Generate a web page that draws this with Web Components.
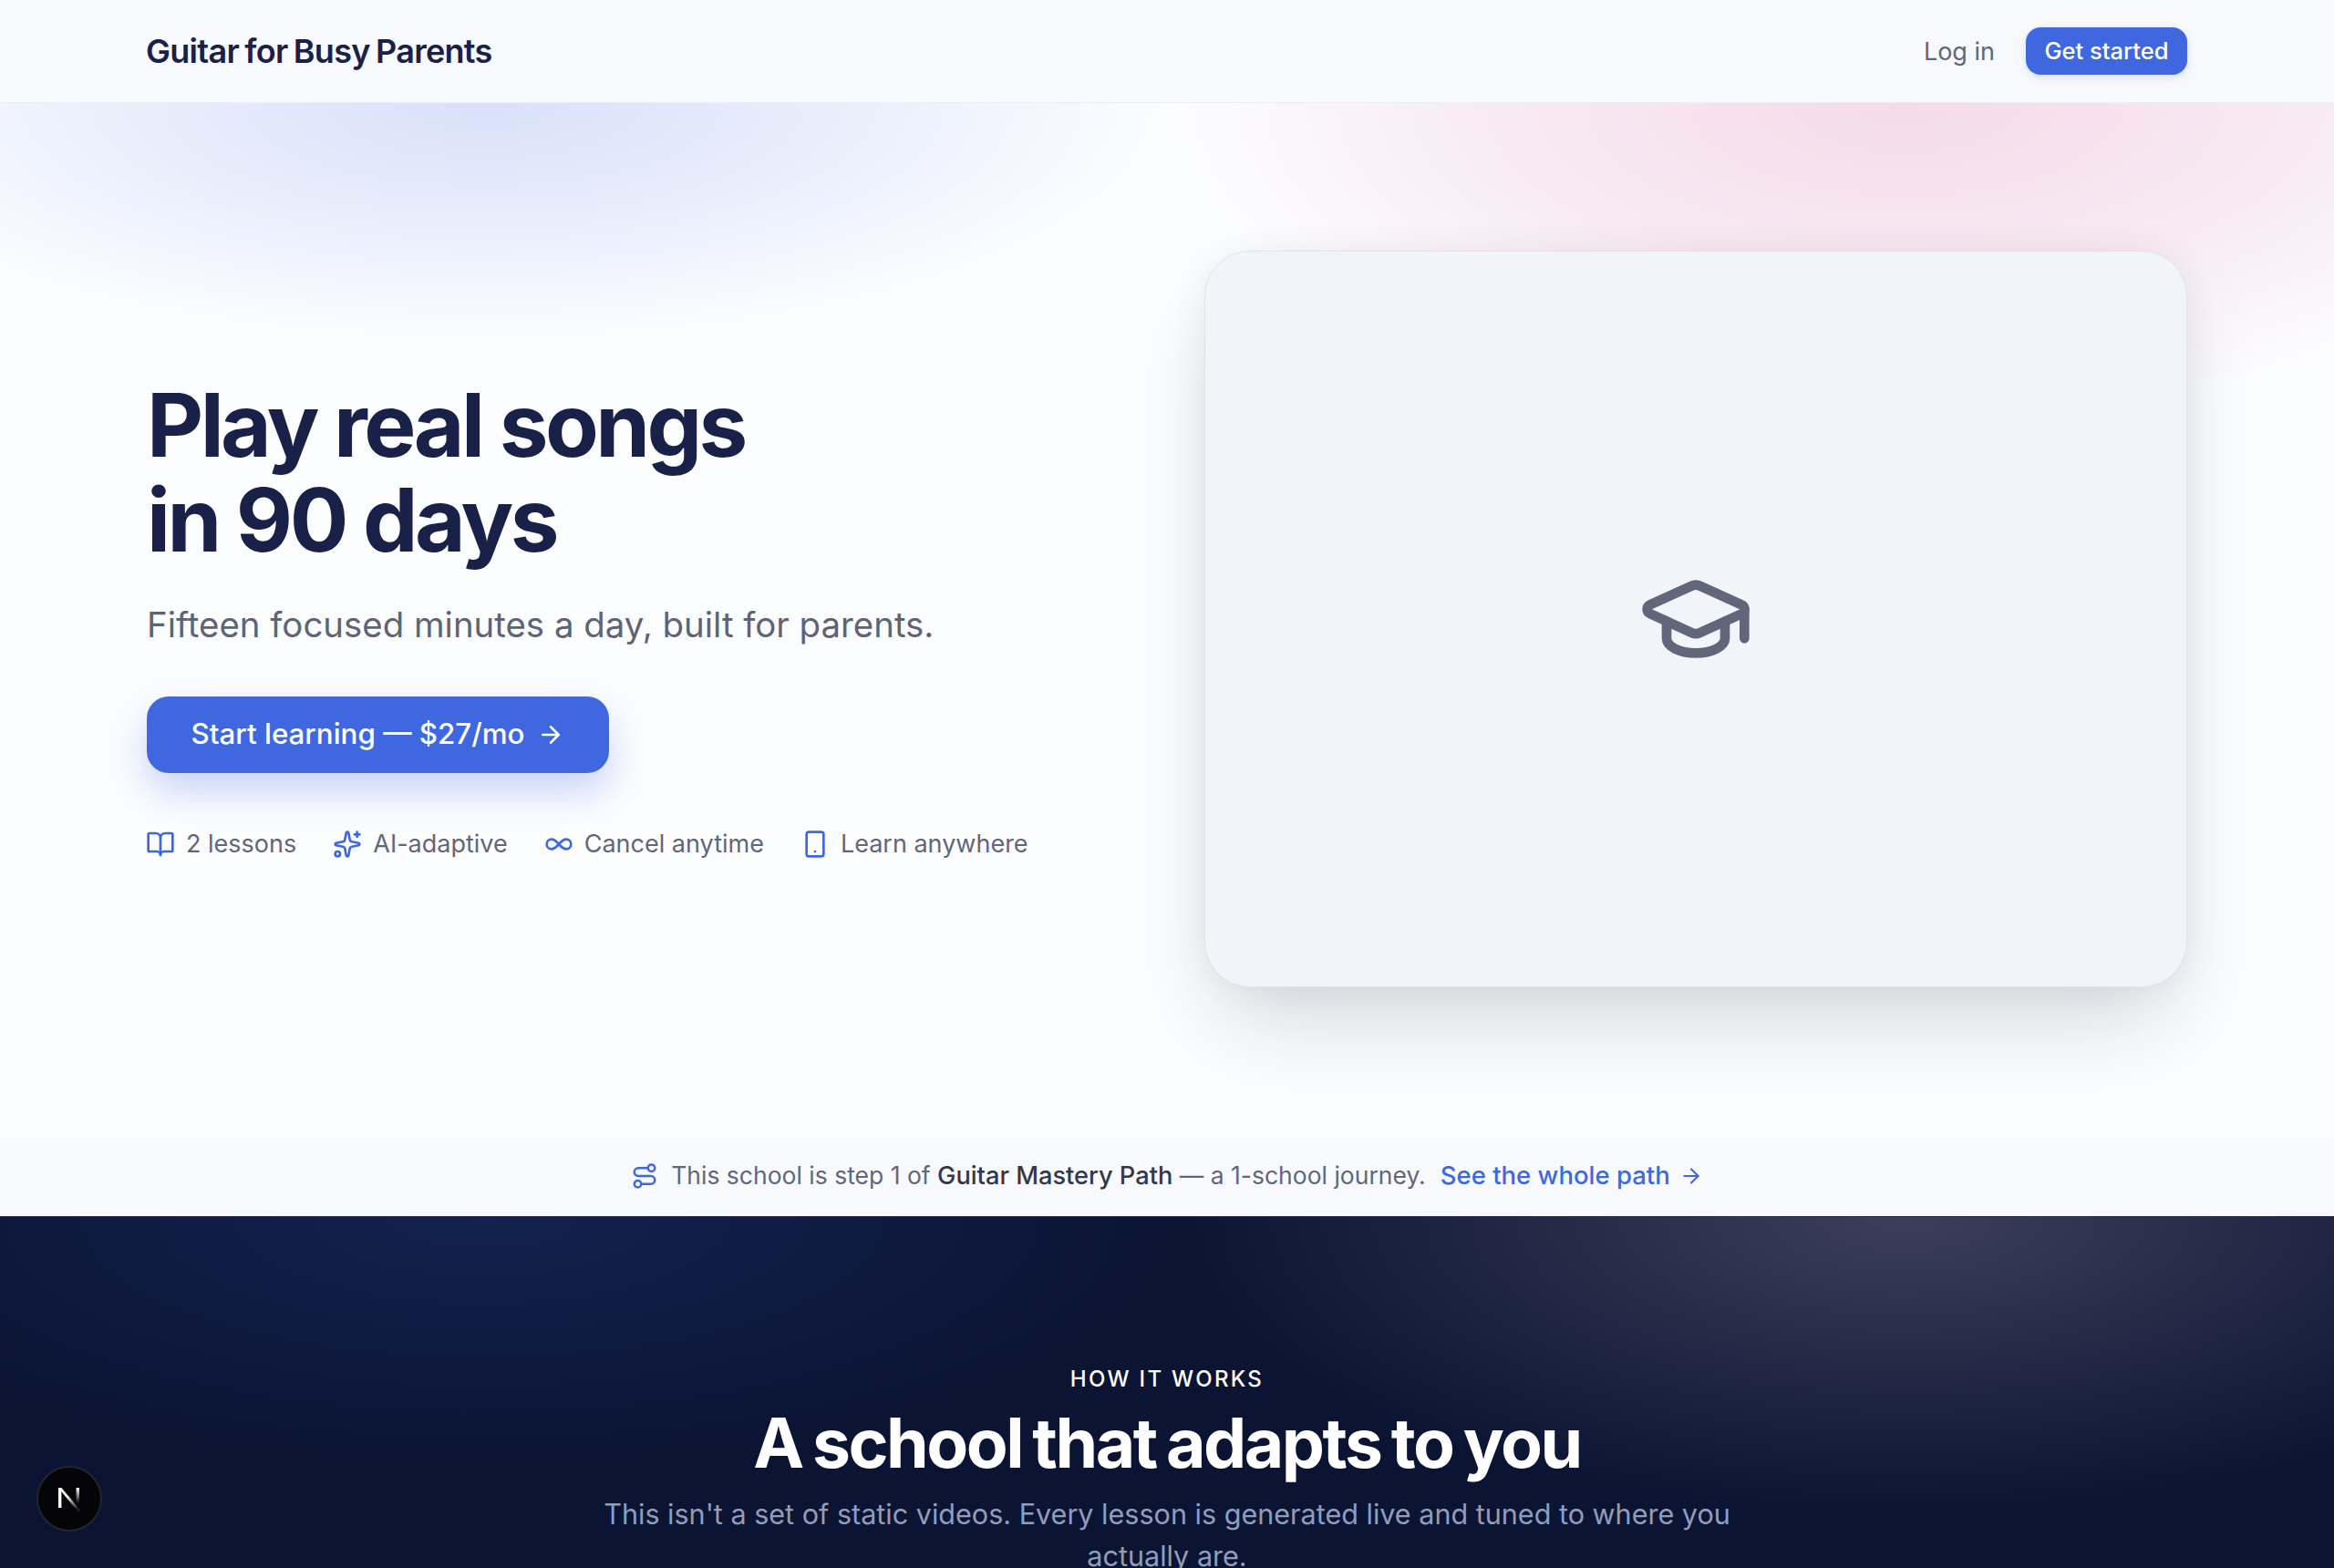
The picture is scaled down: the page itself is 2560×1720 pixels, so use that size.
<!DOCTYPE html>
<html lang="en"><head><meta charset="utf-8"><title>Guitar for Busy Parents</title>
<style>
html,body{margin:0;padding:0}
body{font-family:Inter,"Noto Sans",sans-serif;background:#fcfdff;height:1720px;overflow:hidden}
</style></head><body>
<site-nav></site-nav>
<hero-section></hero-section>
<path-banner></path-banner>
<how-section></how-section>
<dev-badge></dev-badge>
<script>
const P={
 book:'<path d="M12 7v14"/><path d="M3 18a1 1 0 0 1-1-1V4a1 1 0 0 1 1-1h5a4 4 0 0 1 4 4 4 4 0 0 1 4-4h5a1 1 0 0 1 1 1v13a1 1 0 0 1-1 1h-6a3 3 0 0 0-3 3 3 3 0 0 0-3-3z"/>',
 spark:'<path d="M11.017 2.814a1 1 0 0 1 1.966 0l1.051 5.558a2 2 0 0 0 1.594 1.594l5.558 1.051a1 1 0 0 1 0 1.966l-5.558 1.051a2 2 0 0 0-1.594 1.594l-1.051 5.558a1 1 0 0 1-1.966 0l-1.051-5.558a2 2 0 0 0-1.594-1.594l-5.558-1.051a1 1 0 0 1 0-1.966l5.558-1.051a2 2 0 0 0 1.594-1.594z"/><path d="M20 2v4"/><path d="M22 4h-4"/><circle cx="4" cy="20" r="2"/>',
 inf:'<path d="M6 16c5 0 7-8 12-8a4 4 0 0 1 0 8c-5 0-7-8-12-8a4 4 0 1 0 0 8"/>',
 phone:'<rect width="14" height="20" x="5" y="2" rx="2"/><path d="M12 18h.01"/>',
 route:'<circle cx="6" cy="19" r="3"/><path d="M9 19h8.5a3.5 3.5 0 0 0 0-7h-11a3.5 3.5 0 0 1 0-7H15"/><circle cx="18" cy="5" r="3"/>',
 cap:'<path d="M21.42 10.922a1 1 0 0 0-.019-1.838L12.83 5.18a2 2 0 0 0-1.66 0L2.6 9.08a1 1 0 0 0 0 1.832l8.57 3.908a2 2 0 0 0 1.66 0z"/><path d="M22 10v6"/><path d="M6 12.5V16a6 3 0 0 0 12 0v-3.5"/>',
 arrow:'<path d="M5 12h14"/><path d="m12 5 7 7-7 7"/>'
};
const ic=(n,s,c='currentColor',w=2)=>`<svg width="${s}" height="${s}" viewBox="0 0 24 24" fill="none" stroke="${c}" stroke-width="${w}" stroke-linecap="round" stroke-linejoin="round" style="flex:none;display:block">${P[n]}</svg>`;
const def=(name,html)=>customElements.define(name,class extends HTMLElement{constructor(){super();this.attachShadow({mode:'open'}).innerHTML=html}});
const HEAD='Inter,"Noto Sans",sans-serif';

def('site-nav',`<style>
:host{display:flex;box-sizing:border-box;height:113px;align-items:center;justify-content:space-between;padding:0 161px 0 160px;background:#f8f9fc;border-bottom:1px solid #eceef3}
.logo{font:600 36px/1 ${HEAD};letter-spacing:-.72px;word-spacing:-2px;color:#1a2149}
.r{display:flex;align-items:center;gap:34px}
.login{font:400 27px/1 Inter,sans-serif;color:#62667a}
.btn{box-sizing:border-box;height:52px;width:177px;margin-top:-1px;display:flex;align-items:center;justify-content:center;background:#3f68e0;color:#fff;font:500 25.5px/1 Inter,sans-serif;border-radius:16px;box-shadow:0 3px 8px rgba(63,104,224,.18)}
</style><div class="logo">Guitar for Busy Parents</div><div class="r"><span class="login">Log in</span><span class="btn">Get started</span></div>`);

def('feature-item',`<style>
:host{display:flex;align-items:center;gap:12px;font:400 27px/1 Inter,sans-serif;color:#62667a}
::slotted(svg){display:block}
</style><slot name="i"></slot><slot></slot>`);

def('hero-section',`<style>
:host{display:grid;box-sizing:border-box;height:1135px;padding:0 161px 3px;grid-template-columns:1fr 1078px;column-gap:82px;align-items:center;
background:
 radial-gradient(ellipse 760px 265px at 530px 0,rgba(63,104,224,.19),rgba(63,104,224,.1) 50%,rgba(63,104,224,0) 100%),
 radial-gradient(ellipse 800px 340px at 2090px 0,rgba(212,80,145,.2),rgba(212,80,145,.11) 55%,rgba(212,80,145,0) 100%),#fcfdff}
.col{padding-bottom:2px}
h1{margin:0;font:700 96px/104px ${HEAD};letter-spacing:-3.55px;color:#1a2149}
.sub{margin:39px 0 0;font:400 38.4px/1.3 Inter,sans-serif;color:#5f6475}
.cta{margin-top:53px;box-sizing:border-box;width:507px;height:84px;display:flex;align-items:center;justify-content:center;gap:14px;background:#3f68e0;color:#fff;font:500 31.3px/1 Inter,sans-serif;border-radius:24px;box-shadow:0 20px 44px rgba(63,104,224,.28)}
.row{margin-top:62px;margin-left:-1px;display:flex;gap:40px}
.card{box-sizing:border-box;height:808px;border-radius:50px;background:#f1f5f9;border:1px solid #e0e4ea;box-shadow:0 50px 100px -20px rgba(20,25,50,.18),0 0 40px rgba(20,25,50,.05);display:flex;align-items:center;justify-content:center;color:#62667a}
</style>
<div class="col"><h1>Play real songs<br>in 90 days</h1>
<p class="sub">Fifteen focused minutes a day, built for parents.</p>
<div class="cta"><span>Start learning — $27/mo</span>${ic('arrow',30)}</div>
<div class="row">
<feature-item>${ic('book',32,'#3f68e0').replace('<svg','<svg slot="i"')}2 lessons</feature-item>
<feature-item>${ic('spark',32,'#3f68e0').replace('<svg','<svg slot="i"')}AI-adaptive</feature-item>
<feature-item>${ic('inf',32,'#3f68e0').replace('<svg','<svg slot="i"')}Cancel anytime</feature-item>
<feature-item>${ic('phone',32,'#3f68e0').replace('<svg','<svg slot="i"')}Learn anywhere</feature-item>
</div></div>
<div class="card">${ic('cap',128,'#62667a')}</div>`);

def('path-banner',`<style>
:host{display:flex;box-sizing:border-box;height:86px;padding-bottom:3px;align-items:center;justify-content:center;gap:14px;background:#f8f9fc;font:400 26.5px/1 Inter,sans-serif;color:#62667a}
b{font-weight:500;font-size:27.2px;color:#33374a}
a{color:#3f68e0;font-weight:500;font-size:27.5px;display:flex;align-items:center;gap:10px;margin-left:2px}
</style>${ic('route',30,'#3f68e0')}<span>This school is step 1 of <b>Guitar Mastery Path</b> — a 1-school journey.</span><a>See the whole path ${ic('arrow',26)}</a>`);

def('how-section',`<style>
:host{display:block;box-sizing:border-box;height:386px;padding-top:163px;text-align:center;overflow:hidden;
background:
 radial-gradient(ellipse 760px 265px at 530px 0,rgba(63,104,224,.16),rgba(63,104,224,0) 100%),
 radial-gradient(ellipse 800px 325px at 2090px 0,rgba(255,235,240,.2),rgba(255,235,240,0) 100%),#0b1433;
border-top:1px solid #262c4c}
.eb{font:500 24px/30px Inter,sans-serif;letter-spacing:2.3px;color:#fff}
h2{margin:13px 0 0;font:700 75px/84px ${HEAD};letter-spacing:-2.5px;word-spacing:-4px;color:#fff}
p{margin:13px auto 0;width:1280px;font:400 30.56px/46px Inter,sans-serif;color:#929cbb}
</style><div class="eb">HOW IT WORKS</div><h2>A school that adapts to you</h2><p>This isn't a set of static videos. Every lesson is generated live and tuned to where you actually are.</p>`);

def('dev-badge',`<style>
:host{position:fixed;left:40px;top:1608px;width:72px;height:72px;box-sizing:border-box;border-radius:50%;background:#050508;border:2px solid #24262c;display:flex;align-items:center;justify-content:center}
</style><svg width="30" height="30" viewBox="0 0 30 30" fill="none"><defs><linearGradient id="g" x1="0" y1="0" x2=".6" y2="1"><stop offset=".45" stop-color="#fff"/><stop offset="1" stop-color="#fff" stop-opacity=".1"/></linearGradient><linearGradient id="h" x1="0" y1="0" x2="0" y2="1"><stop offset="0" stop-color="#fff"/><stop offset="1" stop-color="#fff" stop-opacity="0"/></linearGradient></defs><path d="M3 3h3.4v22H3z" fill="#fff"/><path d="M3 3h3.4l21 25-2.6 1.6z" fill="url(#g)"/><path d="M22.6 3H26v17h-3.4z" fill="url(#h)"/></svg>`);
</script></body></html>
